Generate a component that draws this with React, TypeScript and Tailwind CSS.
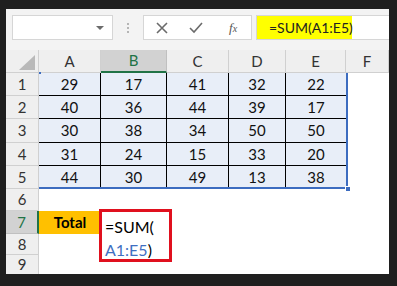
import React from 'react';

const cols = ['A', 'B', 'C', 'D', 'E', 'F'];
const data = [
  [29, 17, 41, 32, 22],
  [40, 36, 44, 39, 17],
  [30, 38, 34, 50, 50],
  [31, 24, 15, 33, 20],
  [44, 30, 49, 13, 38],
];

const font = { fontFamily: 'Lato, "Liberation Sans", sans-serif' };

export default function App() {
  return (
    <div className="w-[397px] h-[286px] bg-[#1f1f1f] pl-[6px] pt-[9px] overflow-hidden" style={font}>
      <div className="w-[383px] h-[265px] bg-white overflow-hidden flex flex-col">
        {/* Formula bar */}
        <div className="h-[41px] bg-[#f3f3f3] flex items-start pt-[6px] pl-[6px]">
          <div className="w-[101px] h-[25px] bg-white border border-[#d6d6d6] flex items-center justify-end pr-[8px]">
            <div className="w-0 h-0 border-l-[4px] border-r-[4px] border-t-[4px] border-l-transparent border-r-transparent border-t-[#6b6b6b]" />
          </div>
          <div className="w-[30px] h-[25px] flex flex-col items-center justify-center gap-[2px]">
            <div className="w-[2px] h-[2px] bg-[#b5b5b5]" />
            <div className="w-[2px] h-[2px] bg-[#b5b5b5]" />
            <div className="w-[2px] h-[2px] bg-[#b5b5b5]" />
          </div>
          <div className="w-[109px] h-[25px] bg-white border border-[#d6d6d6] flex items-center pl-[12px]">
            <svg width="12" height="12" viewBox="0 0 12 12">
              <path d="M1 1 L11 11 M11 1 L1 11" stroke="#6b6b6b" strokeWidth="1.6" />
            </svg>
            <svg className="ml-[21px]" width="14" height="12" viewBox="0 0 14 12">
              <path d="M1 6 L5 10 L13 1" stroke="#6b6b6b" strokeWidth="1.6" fill="none" />
            </svg>
            <span className="ml-[26px] text-[13px] italic text-[#555]" style={{ fontFamily: '"Liberation Serif", serif' }}>
              f<span className="text-[10px]">x</span>
            </span>
          </div>
          <div className="ml-[4px] flex-1 h-[25px] bg-white border border-[#d6d6d6] border-r-0 flex">
            <div className="w-[95px] h-full bg-[#ffff00] flex items-center pl-[12px] text-[14px] text-[#222]">
              =SUM(A1:E5)
            </div>
          </div>
        </div>

        {/* Sheet */}
        <div
          className="relative grid grid-cols-[33px_62px_66px_62px_57px_60px_43px] grid-rows-[23px_23px_23px_24px_23px_23px_22px_23px_21px_19px] text-[15px] text-[#111]"
        >
          {/* header row */}
          <div className="bg-[#efefef] border-r border-b border-[#d0d0d0] relative">
            <div className="absolute right-[3px] bottom-[2px] w-0 h-0 border-l-[15px] border-t-[15px] border-l-transparent border-t-transparent border-b-0 border-r-0"
              style={{ borderLeftColor: 'transparent' }} />
            <svg className="absolute right-[3px] bottom-[2px]" width="16" height="15" viewBox="0 0 16 15">
              <path d="M16 0 L16 15 L0 15 Z" fill="#b9b9b9" />
            </svg>
          </div>
          {cols.map((c) => (
            <div
              key={c}
              className={
                c === 'B'
                  ? 'bg-[#d2d2d2] border-r border-[#c0c0c0] border-b-2 border-b-[#217346] flex items-center justify-center text-[#217346]'
                  : 'bg-[#efefef] border-r border-b border-[#d0d0d0] flex items-center justify-center text-[#333]'
              }
            >
              {c}
            </div>
          ))}

          {/* data rows */}
          {data.map((row, r) => (
            <React.Fragment key={r}>
              <div className="bg-[#efefef] border-r border-b border-[#d0d0d0] flex items-center justify-center text-[#333]">
                {r + 1}
              </div>
              {row.map((v, i) => (
                <div
                  key={i}
                  className={`bg-[#e8eef8] flex items-center justify-center border-b ${r === 4 ? 'border-b-transparent' : 'border-b-black'} ${i < 4 ? 'border-r border-r-black' : ''}`}
                >
                  {v}
                </div>
              ))}
              <div className="bg-white" />
            </React.Fragment>
          ))}

          {/* row 6 */}
          <div className="bg-[#efefef] border-r border-b border-[#d0d0d0] flex items-center justify-center text-[#333]">6</div>
          <div className="col-span-6 bg-white" />

          {/* row 7 */}
          <div className="bg-[#d2d2d2] border-b border-[#c0c0c0] border-r-2 border-r-[#217346] flex items-center justify-center text-[#217346]">7</div>
          <div className="bg-[#ffc000] flex items-center justify-center font-bold text-black">Total</div>
          <div className="row-span-2 relative bg-white">
            <div className="absolute -left-[2px] -top-[2px] w-[73px] h-[53px] border-[3px] border-[#e0101e] pl-[3px] pt-[3px] leading-[23px] text-[16px] text-black">
              <div>=SUM(</div>
              <div>
                <span className="text-[#3f6fc2]">A1:E5</span>)
              </div>
            </div>
          </div>
          <div className="col-span-4 bg-white" />

          {/* row 8 */}
          <div className="bg-[#efefef] border-r border-b border-[#d0d0d0] flex items-center justify-center text-[#333]">8</div>
          <div className="bg-white" />
          <div className="col-span-4 bg-white" />

          {/* row 9 */}
          <div className="bg-[#efefef] border-r border-[#d0d0d0] flex items-center justify-center text-[#333]">9</div>
          <div className="col-span-6 bg-white" />

          {/* selection border overlay */}
          <div className="absolute left-[33px] top-[23px] w-[309px] h-[116px] border-r-2 border-b-2 border-[#3c6cc0] pointer-events-none" />
          <div className="absolute left-[33px] top-[22px] w-[2px] h-[2px] bg-[#3c6cc0]" />
          <div className="absolute left-[339px] top-[136px] w-[6px] h-[6px] bg-[#3c6cc0] border border-white" />
        </div>
      </div>
    </div>
  );
}
